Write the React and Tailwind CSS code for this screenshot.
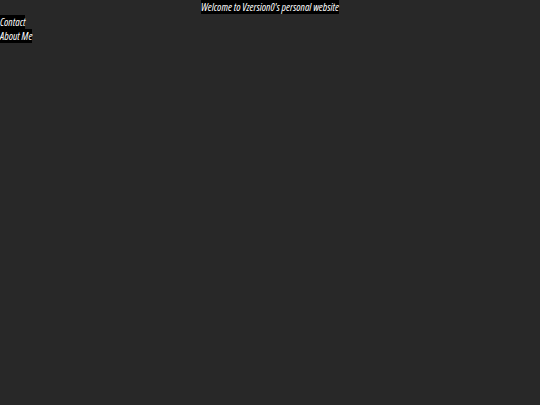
export default function App() {
    return (
        <div className="min-h-screen bg-[#282828] text-white italic font-stretch-condensed font-['Open_Sans',sans-serif] text-[10.7px] leading-[14px]">
            <header className="text-center">
                <span className="bg-black">Welcome to Vzersion0's personal website</span>
            </header>
            <nav className="flex flex-col items-start pt-px">
                <a className="bg-black">Contact</a>
                <a className="bg-black">About Me</a>
            </nav>
        </div>
    );
}
